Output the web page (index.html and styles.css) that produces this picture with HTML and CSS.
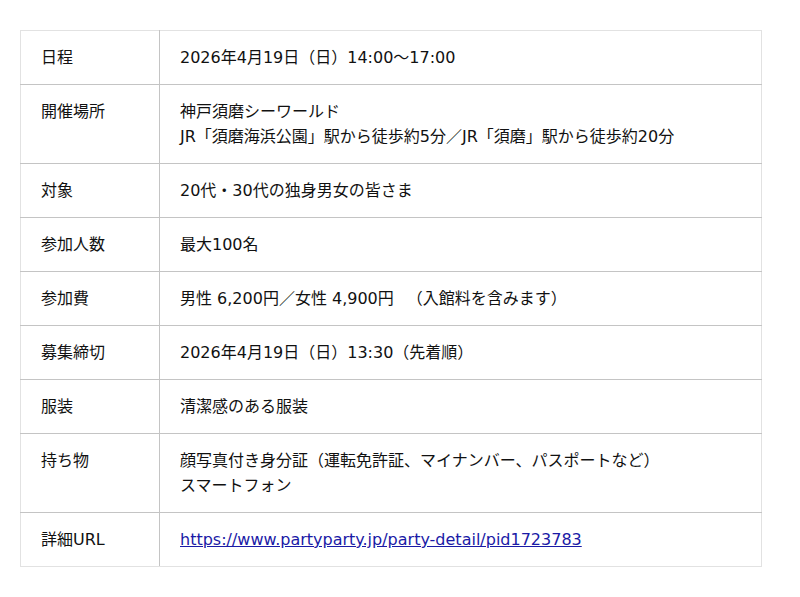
FILE: index.html
```html
<!DOCTYPE html>
<html lang="ja">
<head>
<meta charset="utf-8">
<link rel="stylesheet" href="styles.css">
</head>
<body>
<table class="info">
  <tr><th>日程</th><td>2026年4月19日（日）14:00～17:00</td></tr>
  <tr><th>開催場所</th><td>神戸須磨シーワールド<br>JR「須磨海浜公園」駅から徒歩約5分／JR「須磨」駅から徒歩約20分</td></tr>
  <tr><th>対象</th><td>20代・30代の独身男女の皆さま</td></tr>
  <tr><th>参加人数</th><td>最大100名</td></tr>
  <tr><th>参加費</th><td>男性 6,200円／女性 4,900円 　（入館料を含みます）</td></tr>
  <tr><th>募集締切</th><td>2026年4月19日（日）13:30（先着順）</td></tr>
  <tr><th>服装</th><td>清潔感のある服装</td></tr>
  <tr><th>持ち物</th><td>顔写真付き身分証（運転免許証、マイナンバー、パスポートなど）<br>スマートフォン</td></tr>
  <tr><th>詳細URL</th><td><a href="#">https://www.partyparty.jp/party-detail/pid1723783</a></td></tr>
</table>
</body>
</html>
```
FILE: styles.css
```css
html, body { background: #fff; }
body {
  margin: 0;
  padding: 30px 38px 0 20px;
  font-family: "DejaVu Sans", "Noto Sans CJK JP", sans-serif;
  font-size: 16px;
  color: #111;
}
.info {
  width: 742px;
  border-collapse: collapse;
}
.info th, .info td {
  border: 1px solid #c4c4c4;
  padding: 14px 20px;
  line-height: 25px;
  text-align: left;
  vertical-align: top;
  font-weight: normal;
}
.info th { width: 98px; }
.info tr:first-child th, .info tr:first-child td { border-top-color: #e2e2e2; }
.info th { border-left-color: #e2e2e2; }
.info td { border-right-color: #e2e2e2; }
.info tr:last-child th, .info tr:last-child td { border-bottom-color: #e2e2e2; }
.info a { color: #1a1aa6; text-decoration: underline; }
```
